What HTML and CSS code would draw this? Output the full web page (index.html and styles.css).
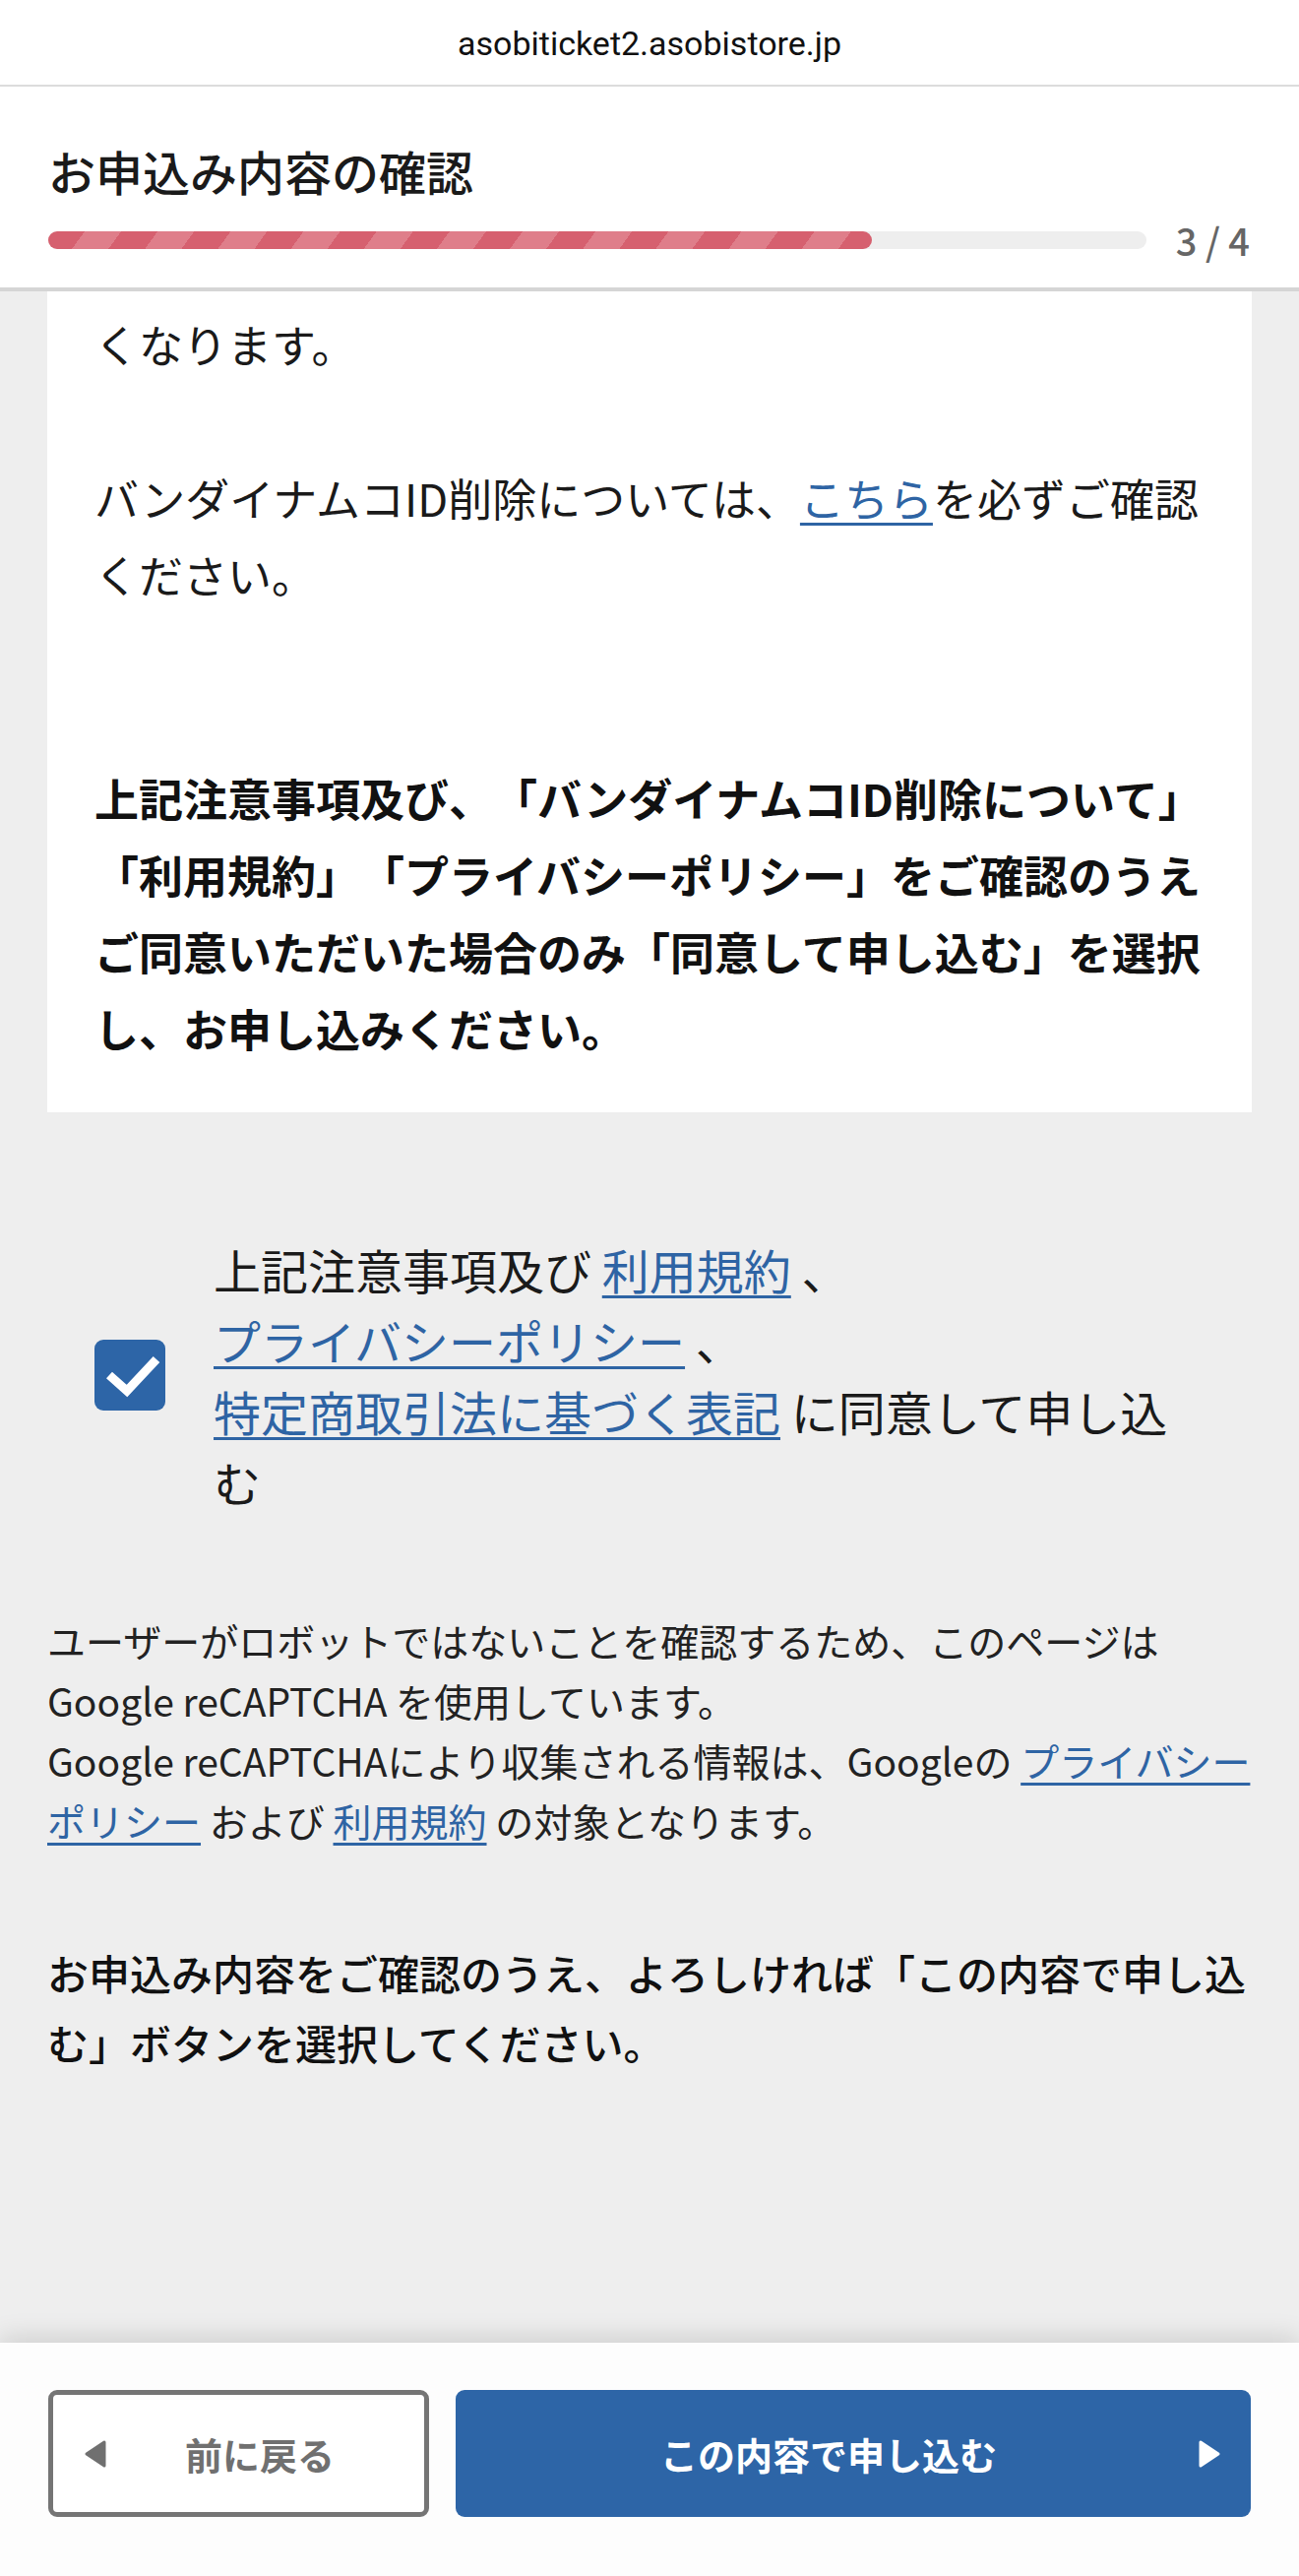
FILE: index.html
```html
<!DOCTYPE html>
<html lang="ja">
<head>
  <meta charset="UTF-8" />
  <meta name="viewport" content="width=device-width, initial-scale=1.0"/>
  <title>お申込み内容の確認</title>
  <link rel="stylesheet" href="styles.css">
</head>
<body>
  <div class="urlbar">asobiticket2.asobistore.jp</div>

  <header class="page-header">
    <h1 class="page-title">お申込み内容の確認</h1>
    <div class="progress">
      <div class="progress-track">
        <div class="progress-fill" style="width: 75%"></div>
      </div>
      <span class="progress-count">3 / 4</span>
    </div>
  </header>

  <main class="content">
    <section class="notice">
      <p>くなります。</p>
      <p class="notice-link">バンダイナムコID削除については、<a href="#">こちら</a>を必ずご確認ください。</p>
      <p class="notice-strong">上記注意事項及び、「バンダイナムコID削除について」「利用規約」「プライバシーポリシー」をご確認のうえご同意いただいた場合のみ「同意して申し込む」を選択し、お申し込みください。</p>
    </section>

    <label class="agree">
      <span class="agree-box">
        <svg width="72" height="72" viewBox="0 0 72 72">
          <path d="M15 36 L33 52 L63 20" fill="none" stroke="#fff" stroke-width="9"/>
        </svg>
      </span>
      <span class="agree-text">上記注意事項及び <a href="#">利用規約</a> 、<a href="#">プライバシーポリシー</a> 、<a href="#">特定商取引法に基づく表記</a> に同意して申し込む</span>
    </label>

    <p class="recaptcha">ユーザーがロボットではないことを確認するため、このページは Google reCAPTCHA を使用しています。<br>Google reCAPTCHAにより収集される情報は、Googleの <a href="#">プライバシーポリシー</a> および <a href="#">利用規約</a> の対象となります。</p>

    <p class="confirm-note">お申込み内容をご確認のうえ、よろしければ「この内容で申し込む」ボタンを選択してください。</p>
  </main>

  <footer class="actions">
    <button class="btn btn-back">
      <svg width="24" height="28" viewBox="0 0 24 28">
        <path d="M21 2 L21 26 L3 14 Z" fill="#707070" stroke="#707070" stroke-width="3" stroke-linejoin="round"/>
      </svg>
      <span class="btn-label">前に戻る</span>
    </button>
    <button class="btn btn-submit">
      <span class="btn-label">この内容で申し込む</span>
      <svg width="24" height="28" viewBox="0 0 24 28">
        <path d="M3 2 L3 26 L21 14 Z" fill="#fff" stroke="#fff" stroke-width="3" stroke-linejoin="round"/>
      </svg>
    </button>
  </footer>
</body>
</html>
```

FILE: styles.css
```css
* {
  box-sizing: border-box;
}

body {
  margin: 0;
  min-height: 100vh;
  display: flex;
  flex-direction: column;
  background-color: #eeeeee;
  color: #1a1a1a;
  font-family: "Noto Sans CJK JP", sans-serif;
  text-spacing-trim: space-all;
}

a {
  color: #2e64a4;
  text-decoration-thickness: 3px;
  text-underline-offset: 6px;
}

p {
  margin: 0;
}

.urlbar {
  height: 88px;
  padding-top: 24px;
  background-color: #fff;
  border-bottom: 2px solid #dcdcdc;
  text-align: center;
  font-family: Roboto, sans-serif;
  font-size: 34px;
  line-height: 40px;
  color: #111;
}

.page-header {
  background-color: #fff;
  padding: 53px 50px 24px 49px;
  border-bottom: 4px solid #d5d5d5;
}

.page-title {
  margin: 0;
  font-size: 48px;
  line-height: 64px;
  font-weight: 500;
}

.progress {
  display: flex;
  align-items: center;
  margin-top: 15px;
}

.progress-track {
  flex: 1;
  height: 18px;
  border-radius: 9px;
  background-color: #eeeeee;
}

.progress-fill {
  height: 100%;
  border-radius: 9px;
  background: repeating-linear-gradient(126deg, #d6606f 0 30px, #df7e8a 30px 60px);
}

.progress-count {
  margin-left: 30px;
  font-size: 38px;
  line-height: 48px;
  font-weight: 500;
  color: #666;
}

.content {
  flex: 1;
  padding: 0 48px 60px;
}

.notice {
  background-color: #fff;
  padding: 15px 48px 46px;
  font-size: 45px;
  line-height: 78px;
}

.notice-link {
  margin-top: 78px;
}

.notice-strong {
  margin-top: 149px;
  font-weight: bold;
  color: #111;
}

.agree {
  display: flex;
  align-items: center;
  gap: 49px;
  margin-top: 123px;
  padding: 0 48px;
  font-size: 48px;
  line-height: 72px;
}

.agree-box {
  flex: none;
  width: 72px;
  height: 72px;
  border-radius: 9px;
  background-color: #2d65a7;
}

.agree-box svg {
  display: block;
}

.agree-text a {
  white-space: nowrap;
}

.recaptcha {
  margin-top: 95px;
  font-size: 39px;
  line-height: 61px;
  color: #222;
}

.confirm-note {
  margin-top: 88px;
  font-size: 42px;
  line-height: 71px;
  font-weight: 500;
  color: #111;
}

.actions {
  display: flex;
  gap: 27px;
  padding: 48px 49px 60px;
  background-color: #fdfdfd;
  box-shadow: 0 -6px 24px rgba(0, 0, 0, 0.13);
}

.btn {
  display: flex;
  align-items: center;
  height: 129px;
  border-radius: 9px;
  font-family: "Noto Sans CJK JP", sans-serif;
  font-size: 38px;
  font-weight: bold;
  cursor: pointer;
}

.btn svg {
  flex: none;
}

.btn-label {
  flex: 1;
  text-align: center;
}

.btn-back {
  width: 387px;
  padding: 0 12px 0 31px;
  border: 5px solid #757575;
  background-color: #fff;
  color: #707070;
}

.btn-submit {
  flex: 1;
  padding: 0 30px 0 4px;
  border: none;
  background-color: #2d65a7;
  color: #fff;
}
```
